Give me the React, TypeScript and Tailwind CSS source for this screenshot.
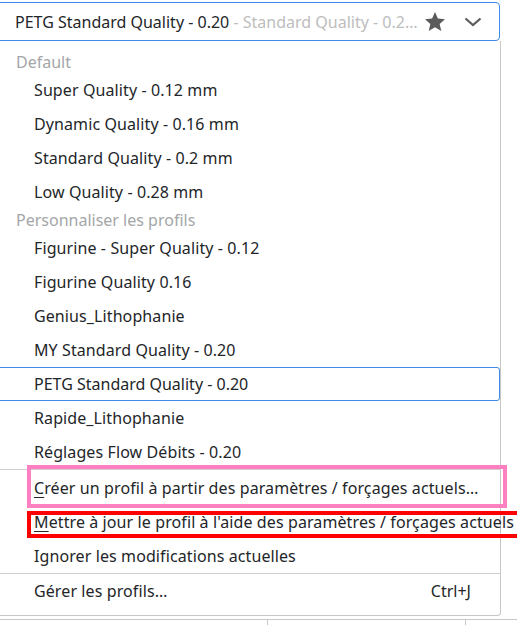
import React from 'react'

const Star = () => (
  <svg width="22" height="21" viewBox="0 0 24 23" className="shrink-0">
    <path d="M12 1.2l3.2 7.1 7.7.7-5.8 5.2 1.8 7.6L12 17.8l-6.9 4 1.8-7.6L1.1 9l7.7-.7z" fill="#5b5b5b" />
  </svg>
)

const Chevron = () => (
  <svg width="20" height="20" viewBox="0 0 20 20" className="shrink-0">
    <path d="M2.5 6.5 L10 13 L17.5 6.5" fill="none" stroke="#5b5b5b" strokeWidth="2.2" />
  </svg>
)

const defaults = ['Super Quality - 0.12 mm', 'Dynamic Quality - 0.16 mm', 'Standard Quality - 0.2 mm', 'Low Quality - 0.28 mm']
const custom = ['Figurine - Super Quality - 0.12', 'Figurine Quality 0.16', 'Genius_Lithophanie', 'MY Standard Quality - 0.20']

function Header({ text }: { text: string }) {
  return <div className="h-[22px] leading-[22px] pl-[22px] text-[#a4a6a8] whitespace-nowrap">{text}</div>
}

function Item({ children, right }: { children: React.ReactNode; right?: string }) {
  return (
    <div className="h-[34px] flex items-center pl-[40px] pr-[29px] text-[#232629] whitespace-nowrap">
      <span className="flex-1 tracking-[0.1px]">{children}</span>
      {right && <span>{right}</span>}
    </div>
  )
}

export default function App() {
  return (
    <div className="relative w-[517px] h-[625px] overflow-hidden bg-white font-['Noto_Sans',sans-serif] text-[16px]">
      {/* combo box */}
      <div className="ml-[-6px] mt-[2px] w-[506px] h-[39px] border border-[#3d8ae8] rounded-[4px] flex items-center pl-[20px] pr-[16px]">
        <span className="flex-1 whitespace-nowrap overflow-hidden">
          <span className="text-[#232629]">PETG Standard Quality - 0.20</span>
          <span className="text-[#bdbdbd]"> - Standard Quality - 0.2…</span>
        </span>
        <span className="ml-[6px]"><Star /></span>
        <span className="ml-[17px]"><Chevron /></span>
      </div>

      {/* menu */}
      <div className="ml-[-6px] w-[507px] border-r border-b border-[#c6c6c6] rounded-br-[4px] rounded-bl-[4px] pt-[10px] pb-[7px]">
        <Header text="Default" />
        {defaults.map(d => <Item key={d}>{d}</Item>)}
        <Header text="Personnaliser les profils" />
        {custom.map(d => <Item key={d}>{d}</Item>)}
        <div className="h-[34px] flex items-center pl-[39px] border border-[#3d8ae8] rounded-[3px] w-[506px] text-[#232629] whitespace-nowrap">
          PETG Standard Quality - 0.20
        </div>
        <Item>Rapide_Lithophanie</Item>
        <Item>Réglages Flow Débits - 0.20</Item>
        <div className="h-px bg-[#cfcfcf] mb-px" />
        <Item><span className="underline underline-offset-[3px]">C</span>réer un profil à partir des paramètres / forçages actuels…</Item>
        <Item><span className="underline underline-offset-[3px]">M</span>ettre à jour le profil à l'aide des paramètres / forçages actuels</Item>
        <Item>Ignorer les modifications actuelles</Item>
        <div className="h-px bg-[#cfcfcf]" />
        <Item right="Ctrl+J">Gérer les profils…</Item>
      </div>

      {/* background table edge */}
      <div className="mt-[3px] h-[6px] border-t border-[#c8c8c8] flex">
        <div className="w-[268px] border-r border-[#c8c8c8]" />
        <div className="w-[198px] border-r border-[#c8c8c8]" />
      </div>

      {/* annotations */}
      <div className="absolute left-[27px] top-[465px] w-[480px] h-[43px] border-[4px] border-[#ff80c0]" />
      <div className="absolute left-[27px] top-[511px] w-[500px] h-[27px] border-[4px] border-[#ff0000]" />
    </div>
  )
}
